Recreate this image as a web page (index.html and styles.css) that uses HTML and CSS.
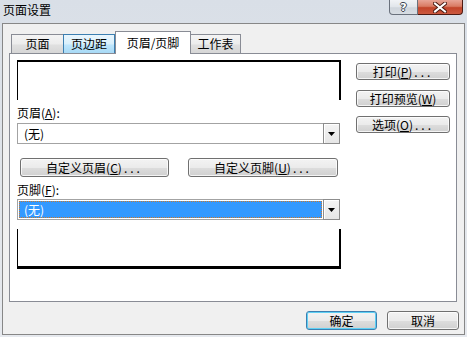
FILE: index.html
```html
<!DOCTYPE html>
<html lang="zh-CN">
<head>
<meta charset="utf-8">
<title>页面设置</title>
<link rel="stylesheet" href="styles.css">
</head>
<body>
<div class="window">
  <div class="titlebar">
    <span class="title">页面设置</span>
    <div class="caption">
      <div class="cap help">?</div>
      <div class="cap close">
        <svg width="14" height="11" viewBox="0 0 14 11"><path d="M2 1.5 L12 9.5 M12 1.5 L2 9.5" stroke="#4a1a12" stroke-width="4" stroke-linecap="square"/><path d="M2 1.5 L12 9.5 M12 1.5 L2 9.5" stroke="#ffffff" stroke-width="2" stroke-linecap="square"/></svg>
      </div>
    </div>
  </div>
  <div class="client">
    <div class="tabs">
      <div class="tab tab-page">页面</div>
      <div class="tab tab-margin hover">页边距</div>
      <div class="tab tab-hf active">页眉/页脚</div>
      <div class="tab tab-sheet">工作表</div>
    </div>
    <div class="panel">
      <div class="leftcol">
        <div class="preview preview-top"></div>
        <div class="label label-header">页眉(<u>A</u>):</div>
        <div class="combo combo-header">
          <span class="val">(无)</span>
          <span class="drop"><svg width="7" height="4" viewBox="0 0 7 4"><path d="M0 0 H7 L3.5 4 Z" fill="#000"/></svg></span>
        </div>
        <div class="btnrow">
          <button class="btn btn-wide">自定义页眉(<u>C</u>)<span class="dots">...</span></button>
          <button class="btn btn-wide2">自定义页脚(<u>U</u>)<span class="dots">...</span></button>
        </div>
        <div class="label label-footer">页脚(<u>F</u>):</div>
        <div class="combo combo-footer">
          <span class="val selected">(无)</span>
          <span class="drop"><svg width="7" height="4" viewBox="0 0 7 4"><path d="M0 0 H7 L3.5 4 Z" fill="#000"/></svg></span>
        </div>
        <div class="preview preview-bottom"></div>
      </div>
      <div class="rightcol">
        <button class="btn side">打印(<u>P</u>)<span class="dots">...</span></button>
        <button class="btn side">打印预览(<u>W</u>)</button>
        <button class="btn side">选项(<u>O</u>)<span class="dots">...</span></button>
      </div>
    </div>
    <div class="footer">
      <button class="btn ok">确定</button>
      <button class="btn cancel">取消</button>
    </div>
  </div>
</div>
</body>
</html>
```
FILE: styles.css
```css
* { box-sizing: border-box; }

body {
  margin: 0;
  width: 467px;
  height: 337px;
  overflow: hidden;
  background: linear-gradient(#d9dfe7, #e2e6eb 60%, #e6e9ee);
  font-family: "Noto Sans CJK SC", "Noto Sans", sans-serif;
  font-size: 12px;
  color: #000;
}

.window {
  display: flex;
  flex-direction: column;
  height: 337px;
}

.titlebar {
  height: 23px;
  display: flex;
  padding: 0 4px 0 3px;
}

.title {
  padding-top: 2px;
  line-height: 16px;
  color: #000;
}

.caption {
  margin-left: auto;
  display: flex;
  height: 15px;
}

.cap {
  height: 15px;
  display: flex;
  align-items: center;
  justify-content: center;
}

.help {
  width: 29px;
  border: 1px solid #6a717c;
  border-top: none;
  border-radius: 0 0 0 4px;
  background: linear-gradient(#f1f3f6, #e1e5ea 50%, #cfd5dc 55%, #d8dde3);
  color: #fff;
  font-family: "DejaVu Sans", sans-serif;
  font-weight: bold;
  font-size: 11px;
  line-height: 13px;
  text-shadow: 1px 0 0 #3c4450, -1px 0 0 #3c4450, 0 1px 0 #3c4450, 0 -1px 0 #3c4450;
}

.close {
  width: 45px;
  border: 1px solid #4f1a12;
  border-top: none;
  border-left: none;
  border-radius: 0 0 4px 0;
  background: linear-gradient(#e8a597, #d97b64 45%, #c2442a 55%, #cc5a40);
}

.client {
  flex: 1;
  margin: 0 2px 2px 2px;
  border: 1px solid #878787;
  background: #f0f0f0;
  padding: 7px 7px 4px 6px;
  display: flex;
  flex-direction: column;
}

.tabs {
  display: flex;
  align-items: flex-end;
  height: 22px;
  margin-left: 2px;
  position: relative;
  z-index: 1;
}

.tab {
  height: 19px;
  border: 1px solid #898c95;
  border-bottom: none;
  background: linear-gradient(#f4f4f4, #ececec 50%, #e0e0e0 55%, #d6d6d6);
  text-align: center;
  line-height: 18px;
}

.tab-page { width: 52px; border-right: none; }
.tab-margin { width: 52px; }
.tab-hf { width: 76px; }
.tab-sheet { width: 50px; border-left: none; }

.tab.hover {
  border-color: #3c7fb1;
  background: linear-gradient(#eaf6fd, #d9f0fc 50%, #bee6fd 55%, #a7d9f5);
}

.tab.active {
  height: 23px;
  margin-bottom: -1px;
  background: #fff;
  padding-top: 2px;
  line-height: 18px;
}

.panel {
  height: 249px;
  border: 1px solid #898c95;
  background: #fff;
  display: flex;
  gap: 16px;
  padding: 6px 0 0 7px;
}

.leftcol {
  width: 323px;
  display: flex;
  flex-direction: column;
}

.preview {
  width: 324px;
  height: 40px;
  background: #fff;
  border-left: 1px solid #000;
  border-right: 2px solid #000;
}

.preview-top { border-top: 2px solid #000; }
.preview-bottom { border-bottom: 3px solid #000; margin-top: 9px; }

.label {
  height: 16px;
  line-height: 16px;
}
.label-header { margin-top: 5px; }
.label-footer { margin-top: 5px; }

.combo {
  height: 21px;
  border: 1px solid #a3a3a3;
  background: #fff;
  display: flex;
}
.combo-header { margin-top: 2px; }
.combo-footer { margin-top: 1px; }

.val {
  flex: 1;
  margin: 1px;
  border: 1px solid transparent;
  padding-left: 4px;
  line-height: 15px;
}

.val.selected {
  background: #3399ff;
  color: #fff;
  border: 1px dotted #c9782e;
}

.drop {
  width: 17px;
  margin: -1px -1px -1px 0;
  border: 1px solid #8c8c8c;
  background: linear-gradient(#f4f4f4, #e6e6e6);
  box-shadow: inset 1px 1px 0 #fff;
  display: flex;
  align-items: center;
  justify-content: center;
}

.btnrow {
  display: flex;
  gap: 19px;
  margin: 14px 0 0 3px;
}

.btn {
  font-family: inherit;
  font-size: 12px;
  color: #000;
  padding: 0;
  border: 1px solid #707070;
  border-radius: 3px;
  background: linear-gradient(#f3f3f3, #ebebeb 50%, #dddddd 52%, #d0d0d0);
  box-shadow: inset 0 0 0 1px rgba(255,255,255,0.75);
  text-align: center;
}

.btn-wide { width: 149px; height: 19px; line-height: 17px; }
.btn-wide2 { width: 150px; height: 19px; line-height: 17px; }

.dots { letter-spacing: 3px; margin-left: 2px; }

.rightcol {
  width: 94px;
  padding-top: 3px;
  display: flex;
  flex-direction: column;
  gap: 9.5px;
}

.btn.side { height: 17px; line-height: 15px; width: 94px; }

.footer {
  display: flex;
  justify-content: flex-end;
  gap: 10px;
  margin: 9px -2px 0 0;
}

.btn.ok, .btn.cancel { height: 19px; line-height: 17px; }
.btn.ok {
  width: 71px;
  border-color: #3c7fb1;
  box-shadow: inset 0 0 0 1px #5ed0f4;
}
.btn.cancel { width: 72px; }
```
